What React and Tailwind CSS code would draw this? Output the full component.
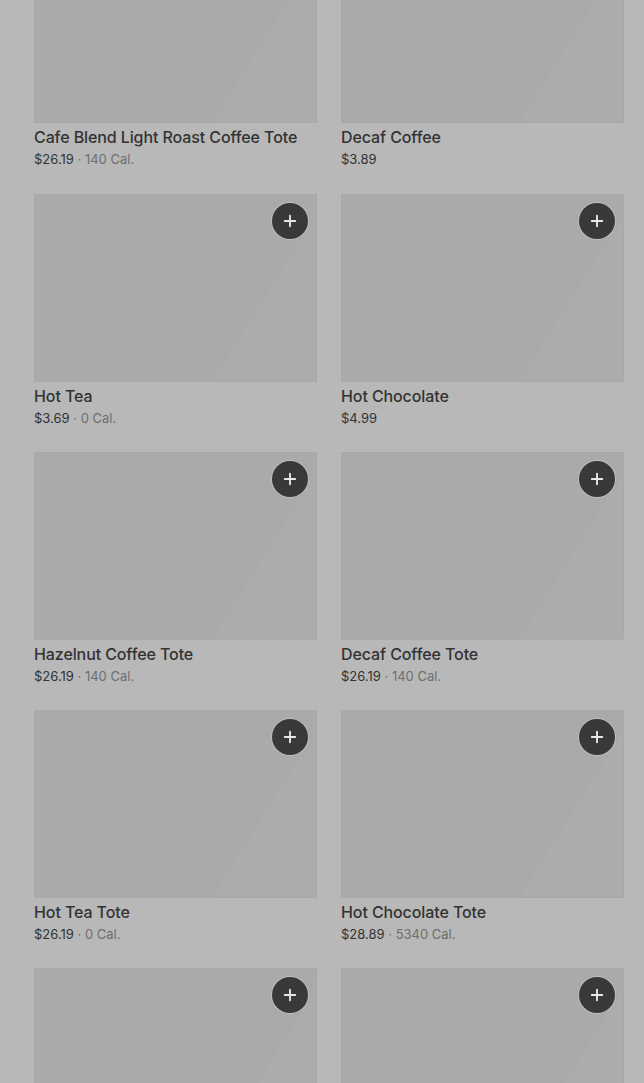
import { Plus } from 'lucide-react'

const items = [
  { name: 'Cafe Blend Light Roast Coffee Tote', price: '$26.19', cal: '140 Cal.', add: false },
  { name: 'Decaf Coffee', price: '$3.89', add: false },
  { name: 'Hot Tea', price: '$3.69', cal: '0 Cal.', add: true },
  { name: 'Hot Chocolate', price: '$4.99', add: true },
  { name: 'Hazelnut Coffee Tote', price: '$26.19', cal: '140 Cal.', add: true },
  { name: 'Decaf Coffee Tote', price: '$26.19', cal: '140 Cal.', add: true },
  { name: 'Hot Tea Tote', price: '$26.19', cal: '0 Cal.', add: true },
  { name: 'Hot Chocolate Tote', price: '$28.89', cal: '5340 Cal.', add: true },
  { name: '', price: '', add: true },
  { name: '', price: '', add: true },
]

const MenuCard = ({ item, first }) => (
  <div className={first ? 'pb-px' : ''}>
    <div className="relative h-[188px] border border-[#a8a8a8] bg-[linear-gradient(122deg,#aaaaaa_74%,#acacac_74%)]">
      {item.add && (
        <button className="absolute top-[8px] right-[8px] flex h-9 w-9 items-center justify-center rounded-full bg-[#393939] text-[#e8e8e8] shadow-[0_0_0_1px_#bdbdbd]">
          <Plus size={18} strokeWidth={2.5} />
        </button>
      )}
    </div>
    {item.name && (
      <div>
        <h3 className="mt-1 text-base leading-5 font-medium tracking-[-0.1px] text-[#333333]">{item.name}</h3>
        <p className="mt-0.5 text-[13px] leading-5 text-[#333333]">
          {item.price}
          {item.cal && <span className="text-[#6e6e6e]"> · {item.cal}</span>}
        </p>
      </div>
    )}
  </div>
)

const App = () => {
  return (
    <div className="h-[1083px] overflow-hidden bg-[#b8b8b8] font-['Inter',sans-serif]">
      <div className="mt-[-65px] grid grid-cols-2 gap-x-6 gap-y-6 pl-[34px] pr-[20px]">
        {items.map((item, i) => (
          <MenuCard key={i} item={item} first={i < 2} />
        ))}
      </div>
    </div>
  )
}

export default App
